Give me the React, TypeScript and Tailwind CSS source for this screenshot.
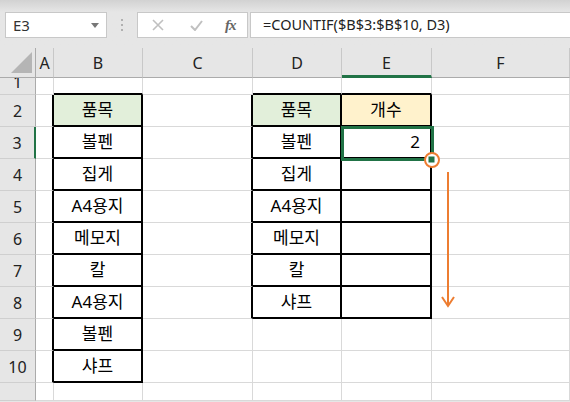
import React from "react";

const COLS = ["A", "B", "C", "D", "E", "F"];

type CellData = { text?: string; bg?: string; align?: "center" | "right" };

const data: Record<string, CellData> = {
  B2: { text: "품목", bg: "bg-[#e2efda]" },
  B3: { text: "볼펜" },
  B4: { text: "집게" },
  B5: { text: "A4용지" },
  B6: { text: "메모지" },
  B7: { text: "칼" },
  B8: { text: "A4용지" },
  B9: { text: "볼펜" },
  B10: { text: "샤프" },
  D2: { text: "품목", bg: "bg-[#e2efda]" },
  E2: { text: "개수", bg: "bg-[#fff2cc]" },
  D3: { text: "볼펜" },
  E3: { text: "2", align: "right" },
  D4: { text: "집게" },
  D5: { text: "A4용지" },
  D6: { text: "메모지" },
  D7: { text: "칼" },
  D8: { text: "샤프" },
};

function inTable(col: string, row: number) {
  if (col === "B" && row >= 2 && row <= 10) return true;
  if ((col === "D" || col === "E") && row >= 2 && row <= 8) return true;
  return false;
}

function nextCol(col: string) {
  const i = COLS.indexOf(col);
  return i >= 0 && i < COLS.length - 1 ? COLS[i + 1] : "";
}

const font = "font-['Noto_Sans','Noto_Sans_CJK_KR',sans-serif]";

function Cell({ col, row }: { col: string; row: number }) {
  const t = inTable(col, row);
  const rightBlack = t || inTable(nextCol(col), row);
  const bottomBlack = t || inTable(col, row + 1);
  const d = data[col + row];
  const cls = [
    "flex items-center overflow-hidden text-[17px] text-black",
    rightBlack ? "border-r-2 border-r-black" : "border-r border-r-[#d9d9d9]",
    bottomBlack ? "border-b-2 border-b-black" : "border-b border-b-[#d9d9d9]",
    d?.bg ?? "bg-white",
    d?.align === "right" ? "justify-end pr-[10px]" : "justify-center",
  ].join(" ");
  return <div className={cls}>{d?.text}</div>;
}

function RowHeader({ row }: { row: number }) {
  const selected = row === 3;
  return (
    <div
      className={
        "flex items-center justify-center overflow-hidden bg-[#e6e6e6] text-[16px] text-[#222] border-b border-b-[#cfcfcf] " +
        (selected ? "border-r-2 border-r-[#217346]" : "border-r border-r-[#ababab]")
      }
    >
      {row === 1 ? <span className="mt-[-8px]">1</span> : row <= 10 ? row : ""}
    </div>
  );
}

export default function App() {
  const rows = [1, 2, 3, 4, 5, 6, 7, 8, 9, 10, 11];
  return (
    <div className={`relative w-[570px] h-[402px] overflow-hidden bg-[#e6e6e6] ${font}`}>
      {/* toolbar */}
      <div className="h-[48px] bg-linear-to-b from-[#d2d2d2] to-[#e6e6e6] to-25% flex items-start pt-[12px] pl-[5px]">
        <div className="w-[102px] h-[26px] bg-white border border-[#c8c8c8] flex items-center justify-between pl-[7px] pr-[7px] text-[15px] text-[#333]">
          <span>E3</span>
          <svg width="8" height="5" viewBox="0 0 8 5">
            <polygon points="0,0 8,0 4,5" fill="#777" />
          </svg>
        </div>
        <div className="w-[30px] h-[26px] flex flex-col items-center justify-center gap-[3px]">
          <div className="w-[2px] h-[2px] bg-[#b0b0b0]" />
          <div className="w-[2px] h-[2px] bg-[#b0b0b0]" />
          <div className="w-[2px] h-[2px] bg-[#b0b0b0]" />
        </div>
        <div className="w-[111px] h-[26px] bg-white border border-[#c8c8c8] flex items-center pl-[14px]">
          <svg width="12" height="12" viewBox="0 0 12 12" className="mr-[26px]">
            <path d="M1 1 L11 11 M11 1 L1 11" stroke="#c0c0c0" strokeWidth="1.6" />
          </svg>
          <svg width="13" height="11" viewBox="0 0 13 11" className="mr-[22px]">
            <path d="M1 6 L5 10 L12 1" stroke="#c0c0c0" strokeWidth="2" fill="none" />
          </svg>
          <span className="font-['Liberation_Serif',serif] italic text-[15px] text-[#666] font-bold tracking-[-1px]">fx</span>
        </div>
        <div className="flex-1 ml-[2px] h-[26px] bg-white border border-r-0 border-[#c8c8c8] flex items-center pl-[12px] text-[14.5px] text-[#222]">
          =COUNTIF($B$3:$B$10, D3)
        </div>
      </div>

      {/* grid */}
      <div className="grid grid-cols-[36px_18px_89px_110px_89px_90px_1fr] grid-rows-[30px_17px_repeat(9,32px)_18px]">
        {/* header row */}
        <div className="relative bg-[#e6e6e6] border-r border-r-[#ababab] border-b border-b-[#ababab] flex items-end justify-end pr-[3px] pb-[4px]">
          <svg width="21" height="21" viewBox="0 0 21 21">
            <polygon points="21,0 21,21 0,21" fill="#b5b5b5" />
          </svg>
        </div>
        {COLS.map((c) => (
          <div
            key={c}
            className={
              "flex items-center justify-center bg-[#e6e6e6] text-[16px] text-[#222] border-r border-r-[#c8c8c8] " +
              (c === "E" ? "border-b-[3px] border-b-[#217346] pt-[2px]" : "border-b border-b-[#ababab]")
            }
          >
            {c}
          </div>
        ))}
        {rows.map((r) => (
          <React.Fragment key={r}>
            <RowHeader row={r} />
            {COLS.map((c) => (
              <Cell key={c + r} col={c} row={r} />
            ))}
          </React.Fragment>
        ))}
      </div>

      {/* overlays: selection, fill handle, annotation */}
      <svg className="absolute left-0 top-0 pointer-events-none" width="570" height="402" viewBox="0 0 570 402">
        <rect x="342.5" y="127.5" width="90" height="32" fill="none" stroke="#217346" strokeWidth="3" />
        <circle cx="432" cy="160" r="7" fill="white" stroke="#ed7d31" strokeWidth="2" />
        <rect x="428.5" y="156.5" width="6" height="6" fill="#217346" />
        <line x1="448" y1="172" x2="448" y2="306" stroke="#ed7d31" strokeWidth="2" />
        <polyline points="442,297 448,306 454,297" fill="none" stroke="#ed7d31" strokeWidth="2" />
      </svg>
    </div>
  );
}
